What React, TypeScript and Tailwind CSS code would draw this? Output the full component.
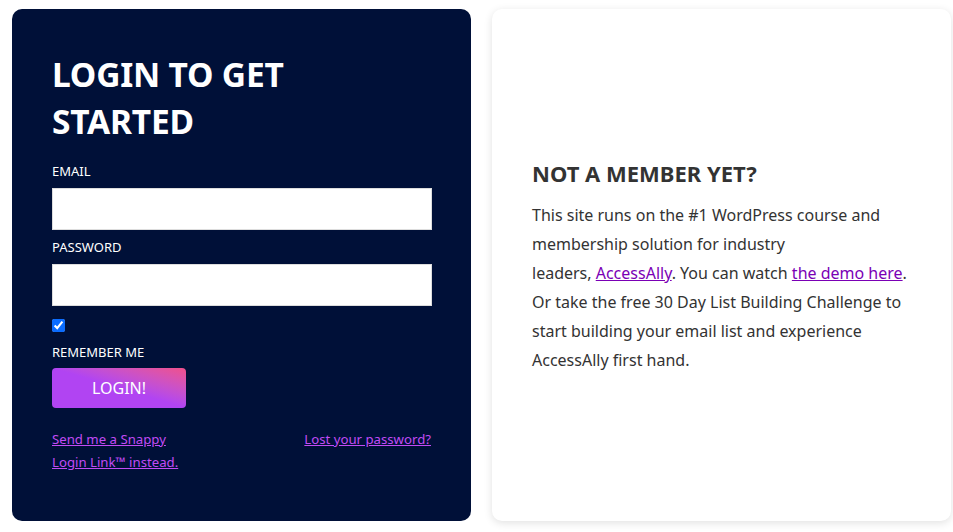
import React from "react";

export default function App() {
  return (
    <div className="w-[953px] h-[532px] bg-white flex gap-[21px] pl-[12px] pt-[9px]" style={{ fontFamily: '"Noto Sans", "Open Sans", sans-serif' }}>
      <div className="w-[459px] h-[512px] bg-[#001038] rounded-[10px] px-[40px] pt-[42px] text-white">
        <h2 className="text-[33.5px] leading-[47px] font-bold tracking-[-0.2px] w-[300px]">LOGIN TO GET STARTED</h2>
        <div className="mt-[16px] text-[13px] leading-[20px]">EMAIL</div>
        <input className="mt-[7px] block w-[380px] h-[42px] bg-white border border-[#ddd]" />
        <div className="mt-[7px] text-[13px] leading-[20px]">PASSWORD</div>
        <input type="password" className="mt-[7px] block w-[380px] h-[42px] bg-white border border-[#ddd]" />
        <input type="checkbox" defaultChecked className="mt-[13px] block w-[13px] h-[13px] accent-[#0a6cff]" />
        <div className="mt-[10px] text-[13px] leading-[20px]">REMEMBER ME</div>
        <button className="mt-[6px] w-[134px] h-[40px] rounded-[4px] text-[16px] text-white bg-gradient-to-tr from-[#b144f2] from-50% to-[#f0508a]">LOGIN!</button>
        <div className="mt-[20px] flex justify-between text-[13.2px] leading-[23px]">
          <a href="#" className="text-[#c24bf5] underline w-[150px]">Send me a Snappy Login Link™ instead.</a>
          <a href="#" className="text-[#c24bf5] underline self-start">Lost your password?</a>
        </div>
      </div>
      <div className="w-[459px] h-[512px] bg-white rounded-[10px] shadow-[0_2px_8px_rgba(0,0,0,0.12)] px-[40px] flex flex-col justify-center text-[#333]">
        <h3 className="text-[22px] font-bold leading-[30px] mt-[2px]">NOT A MEMBER YET?</h3>
        <p className="mt-[13px] text-[16px] leading-[29px] w-[380px]">
          This site runs on the #1 WordPress course and membership solution for industry<br />leaders, <a href="#" className="text-[#7a00b5] underline">AccessAlly</a>. You can watch <a href="#" className="text-[#7a00b5] underline">the demo here</a>. Or take the free 30 Day List Building Challenge to start building your email list and experience AccessAlly first hand.
        </p>
      </div>
    </div>
  );
}
